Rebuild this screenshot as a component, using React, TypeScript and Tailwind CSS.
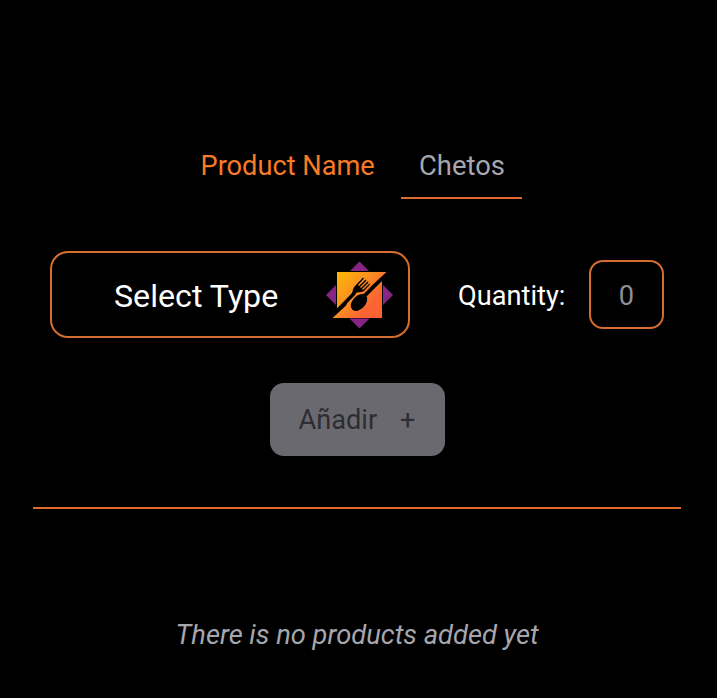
function FoodIcon() {
  return (
    <svg viewBox="326 261 68 68" className="h-[68px] w-[68px] shrink-0" aria-hidden="true">
      <defs>
        <linearGradient id="warm" gradientUnits="userSpaceOnUse" x1="337" y1="278" x2="370" y2="306">
          <stop offset="0" stopColor="#fdb408" />
          <stop offset="0.5" stopColor="#fb9022" />
          <stop offset="1" stopColor="#fb6432" />
        </linearGradient>
      </defs>
      <path d="M359.5 261.5 393 295 359.5 328.500 326 295Z" fill="#862583" />
      <path d="M336 271H388L383 277V318.500H332L336 314Z" fill="#000" />
      <path d="M337 272H386.500L365 292 352 296 337 309Z" fill="url(#warm)" />
      <path d="M332.500 318 346 305.500 352 293 365 291 382 280V318Z" fill="url(#warm)" />
      <path d="M336 309.500 353 292 356 294 336 314.500Z" fill="#000" />
      <path d="M386 273 383 280 366 297 363 294.500Z" fill="#000" />
      <path d="M351.500 295C353 293 352 289 355 286L363 277.500 364 278.500 358 285 359 286 365.500 279.500 366.500 280.500 360 287 361 288 367.500 281.500 368.500 282.500 362 289 363 290 369.500 283.500 370 284.500 364 291C361 293 358 291 355 294Z" fill="#000" />
      <ellipse cx="359" cy="302.500" rx="9.800" ry="6.500" transform="rotate(-46 359 302.5)" fill="#000" />
    </svg>
  );
}

export default function App() {
  return (
    <main className="flex h-[698px] w-[717px] flex-col overflow-hidden bg-black pt-[140px] font-['Roboto',sans-serif] text-[27.2px] leading-8 text-white">
      <div className="flex h-[59px] pl-[200.5px]">
        <label htmlFor="product" className="w-[200.5px] shrink-0 pt-[10px] whitespace-nowrap text-[#f97a24]">Product Name</label>
        <div id="product" className="w-[121px] border-b-2 border-[#de6a32] pt-[10px] pl-[18px] text-[27.4px] text-[#a6a7ae]">Chetos</div>
      </div>
      <div className="mt-[52px] flex h-[87px] items-center pl-[50px]">
        <button className="flex h-[87px] w-[360px] shrink-0 items-center rounded-[18px] border-2 border-[#d56c30] pl-[62px] text-[32.2px]">
          <span className="w-[212px] shrink-0 pt-[2px] text-left whitespace-nowrap">Select Type</span>
          <FoodIcon />
        </button>
        <span className="ml-[48px] w-[131px] shrink-0 pt-[3px] whitespace-nowrap">Quantity:</span>
        <div className="flex h-[69px] w-[75px] shrink-0 items-center justify-center rounded-[14px] border-2 border-[#d56c30] pt-[3px] text-[#8e8f96]">0</div>
      </div>
      <button className="mt-[44.5px] ml-[269.5px] flex h-[73px] w-[175px] shrink-0 items-center rounded-[14px] bg-[#6b6970] pt-[2px] pl-[29px] text-[#2e2d32]">
        <span className="w-[101.5px] text-left">Añadir</span>
        <span>+</span>
      </button>
      <hr className="mt-[51.5px] ml-[33px] w-[648px] shrink-0 border-t-2 border-[#de6a2c]" />
      <p className="mt-[110px] pl-[175.5px] text-[27.3px] whitespace-nowrap text-[#a6a7ae] italic">There is no products added yet</p>
    </main>
  );
}
